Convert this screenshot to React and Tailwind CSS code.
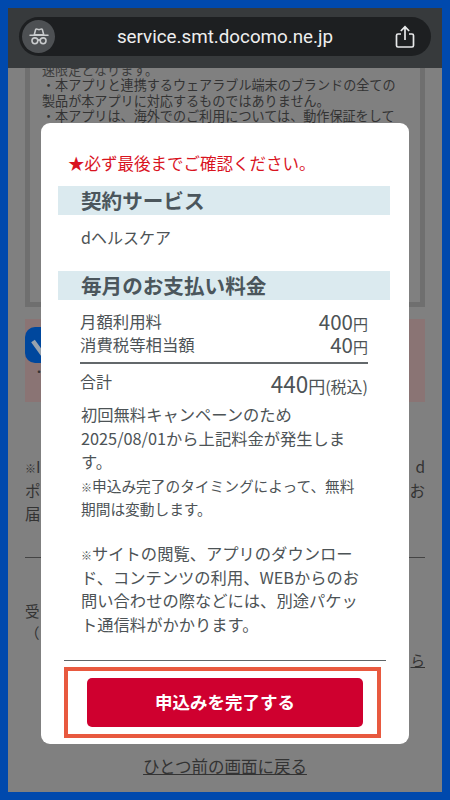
import React from 'react';

const FONT = "font-['Noto_Sans_CJK_JP','Noto_Sans',sans-serif]";

const IncognitoIcon = () => (
  <svg width="24" height="21" viewBox="0 0 28 24" fill="none" stroke="#c9cbcd" strokeWidth="1.8">
    <path d="M8.500 10 L10 4.200 Q10.400 3 11.800 3.400 L14 4 L16.200 3.400 Q17.600 3 18 4.200 L19.500 10 Z" />
    <path d="M3.500 10.500 H24.500" strokeLinecap="round" />
    <circle cx="9.200" cy="17" r="3.400" />
    <circle cx="18.800" cy="17" r="3.400" />
    <path d="M12.600 16.400 Q14 15.400 15.400 16.400" />
  </svg>
);

const ShareIcon = () => (
  <svg width="20" height="24" viewBox="0 0 20 24" fill="none" stroke="#e8e9ea" strokeWidth="1.7">
    <path d="M6 9 H3 Q1.500 9 1.500 10.500 V20.500 Q1.500 22 3 22 H17 Q18.500 22 18.500 20.500 V10.500 Q18.500 9 17 9 H14" />
    <path d="M10 15 V2 M5.800 6 L10 1.800 L14.200 6" />
  </svg>
);

const Kome = () => <span className="text-[11px] leading-none font-medium">※</span>;

// everything behind the dialog
const BackPage = () => (
  <div className="flex flex-col h-full pt-[60px] overflow-hidden text-[#333333]">
    <div className="mx-[17px] h-[239px] shrink-0 border-[5px] border-t-0 border-[#6f6f6f] pl-[12px] pr-[22px] text-[13.100px] leading-[15.400px] overflow-hidden">
      <p className="mt-[-6px] text-[#3c3c3c]">速限定となります。</p>
      <p>・本アプリと連携するウェアラブル端末のブランドの全ての製品が本アプリに対応するものではありません。</p>
      <p>・本アプリは、海外でのご利用については、動作保証をして</p>
    </div>
    <div className="mx-[17px] mt-3 h-[83px] shrink-0 bg-[#8a7474] pt-2">
      <div className="w-9 h-9 rounded-[10px] bg-[#00479d]">
        <svg width="36" height="36" viewBox="0 0 36 36" fill="none" stroke="#9aa3ad" strokeWidth="4.500">
          <path d="M8 14 L16 25 L30 8" />
        </svg>
      </div>
      <div className="pl-[8px] text-[12px] leading-4 mt-[1px]">・</div>
    </div>
    <div className="mx-[17px] mt-[53px] text-[15.500px] leading-[23.500px]">
      <div className="flex justify-between"><span><Kome />I</span><span>d</span></div>
      <div className="flex justify-between"><span>ポ</span><span>お</span></div>
      <div>届</div>
    </div>
    <div className="mx-[17px] mt-[31px] border-t border-[#444444]" />
    <div className="mx-[17px] mt-[42px] text-[14.500px] leading-[22px]">
      <div>受</div>
      <div>（</div>
      <div className="flex justify-end mt-[5px]"><span className="underline">ら</span></div>
    </div>
    <div className="mt-[83px] text-center text-[16.500px] leading-6 underline">ひとつ前の画面に戻る</div>
  </div>
);

const SectionTitle = ({ children }) => (
  <div className="h-[29px] bg-[#dbeaef] pl-[23px] text-[20.600px] leading-[29px] font-bold text-[#4b565c]">{children}</div>
);

const FeeRow = ({ label, amount }) => (
  <div className="flex justify-between h-[23px] text-[16.400px] leading-[20px]">
    <span>{label}</span>
    <span className="self-end text-[20.500px] leading-[20px]">{amount}<span className="text-[15px]">円</span></span>
  </div>
);

const Dialog = () => (
  <div className="absolute left-[33px] top-[115px] w-[368px] h-[621px] bg-white rounded-[9px] flex flex-col text-[#4d5356]">
    <div className="pl-[17px] pr-[19px]">
      <p className="mt-[28px] pl-[10px] text-[16.500px] leading-6 text-[#d9141f]">★必ず最後までご確認ください。</p>
      <div className="mt-[11px]"><SectionTitle>契約サービス</SectionTitle></div>
      <p className="mt-[10px] pl-[23px] text-[16px] leading-6">dヘルスケア</p>
      <div className="mt-[22px]"><SectionTitle>毎月のお支払い料金</SectionTitle></div>
      <div className="mt-[11px] mx-[22px]">
        <FeeRow label="月額利用料" amount="400" />
        <FeeRow label="消費税等相当額" amount="40" />
        <div className="mt-[5px] border-t-2 border-[#63686b]" />
        <div className="flex justify-between items-end h-[37px]">
          <span className="self-start mt-1 text-[16px] leading-[26px]">合計</span>
          <span className="text-[22.500px] leading-[30px]">440<span className="text-[17px]">円</span><span className="text-[16px]">(税込)</span></span>
        </div>
      </div>
      <div className="mt-[2px] ml-[23px] w-[286px] text-[16.300px] leading-[23.500px]">
        <p>初回無料キャンペーンのため<br />2025/08/01から上記料金が発生します。</p>
        <p className="text-[14.700px]"><Kome />申込み完了のタイミングによって、無料期間は変動します。</p>
        <p className="mt-[21.500px]"><Kome />サイトの閲覧、アプリのダウンロード、コンテンツの利用、WEBからのお問い合わせの際などには、別途パケット通信料がかかります。</p>
      </div>
    </div>
    <div className="mt-auto mx-[23px] border-t border-[#5f6568]" />
    <div className="mt-[6px] mb-[6px] ml-[23px] mr-[28px] h-[71px] border-4 border-[#e8593f] flex items-center justify-center pl-[5px]">
      <button className="w-[276px] h-[49px] rounded-[5px] bg-[#cf002f] text-white text-[17.500px] font-bold">申込みを完了する</button>
    </div>
  </div>
);

export default function App() {
  return (
    <div className={`${FONT} w-[450px] h-[800px] bg-[#0049ad] p-2 overflow-hidden`}>
      <div className="relative w-[434px] h-[784px] bg-[#808080] overflow-hidden">
        <BackPage />
        <Dialog />
        {/* browser bar */}
        <div className="absolute inset-x-0 top-0 h-[60px] bg-[#373a3c] pt-[9px] px-[11px]">
          <div className="relative h-[39px] rounded-full bg-[#1d1f21] flex items-center justify-center">
            <div className="absolute left-[3px] top-[3px] w-[33px] h-[33px] rounded-full bg-[#4d5053] flex items-center justify-center">
              <IncognitoIcon />
            </div>
            <span className="font-['Roboto','Liberation_Sans',sans-serif] text-[18.800px] text-[#eeeeee] translate-y-[1px]">service.smt.docomo.ne.jp</span>
            <div className="absolute right-[16px] top-[8px]"><ShareIcon /></div>
          </div>
        </div>
      </div>
    </div>
  );
}
